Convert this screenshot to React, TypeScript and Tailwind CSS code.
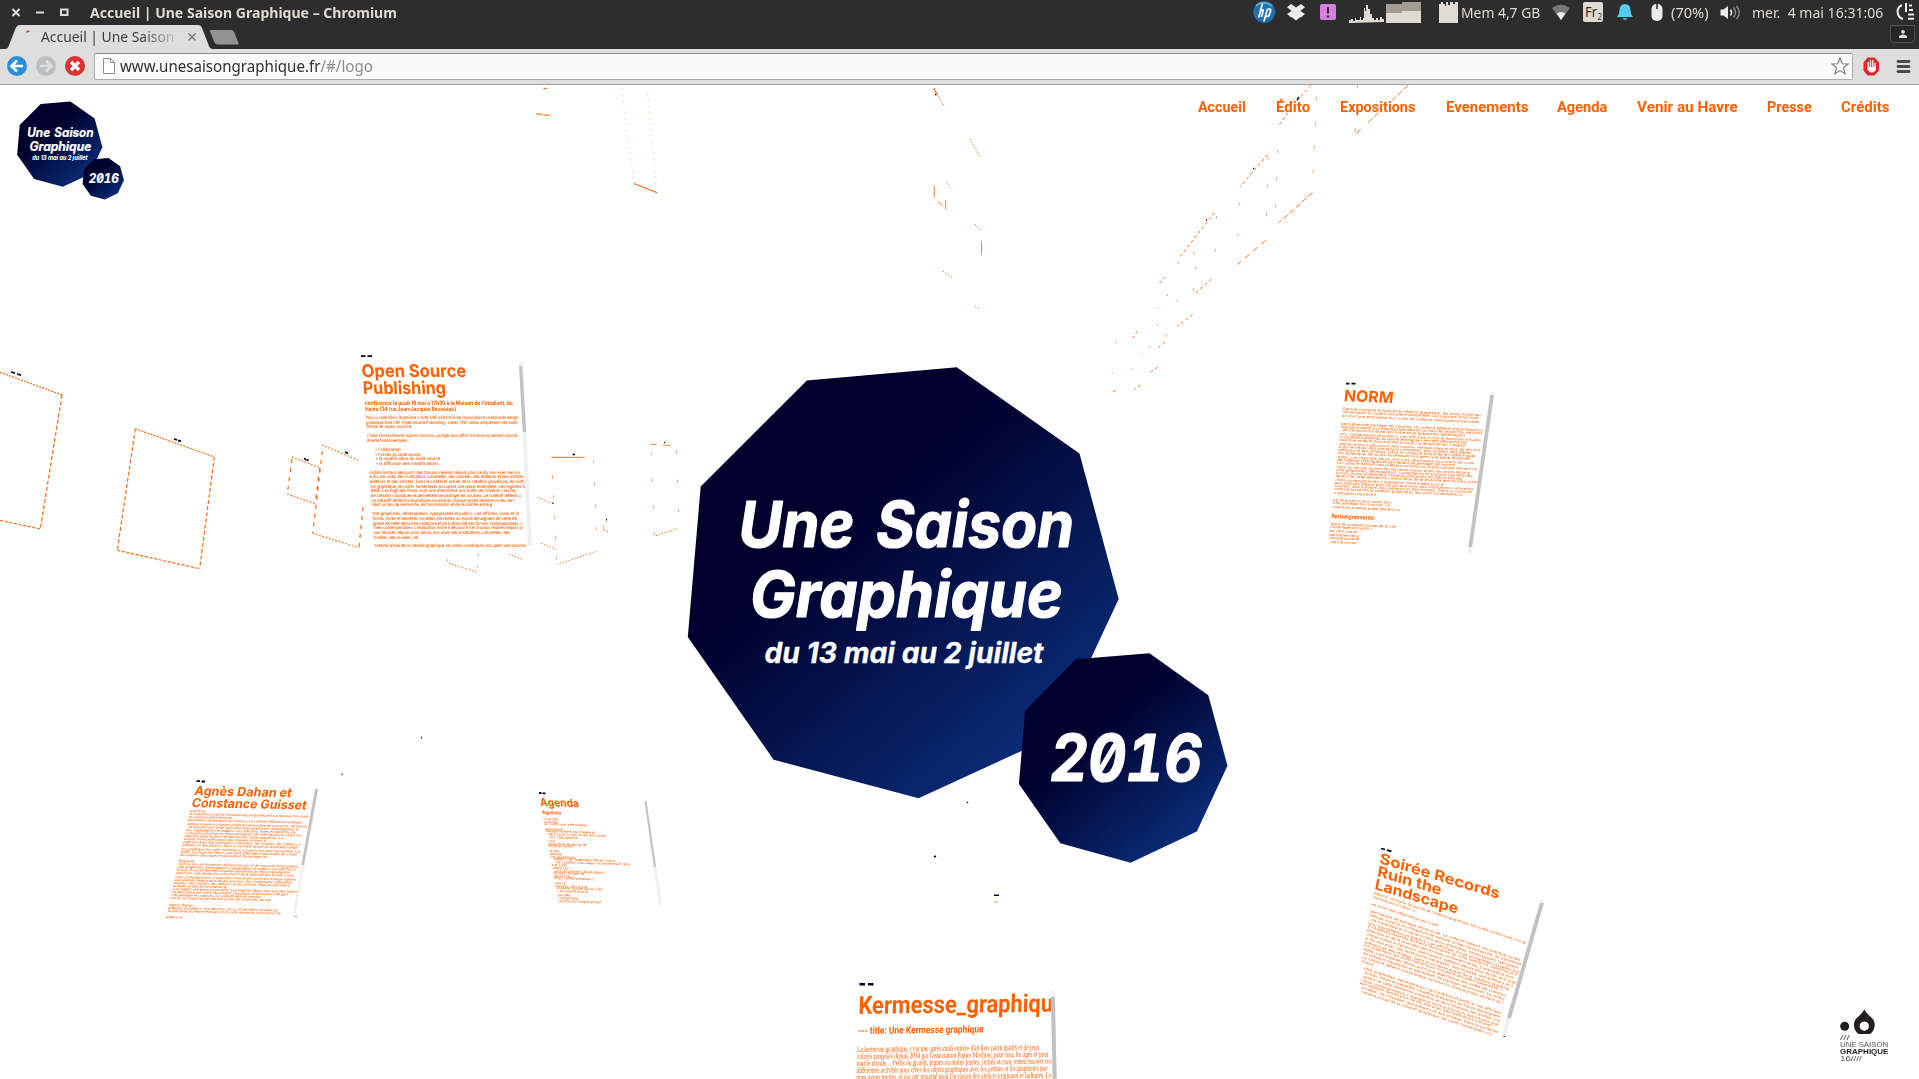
import React, { useLayoutEffect, useRef, useState } from "react";

/* Single line of text stretched horizontally to the given width. */
function Fit({ w, children, className = "", origin = "origin-left" }: { w: number; children: React.ReactNode; className?: string; origin?: string }) {
  const ref = useRef<HTMLSpanElement>(null);
  const [s, setS] = useState(1);
  useLayoutEffect(() => {
    const el = ref.current;
    if (el && el.offsetWidth) setS(w / el.offsetWidth);
  }, [w]);
  return (
    <span className={"block shrink-0 whitespace-nowrap " + className} style={{ width: w }}>
      <span ref={ref} className={"inline-block " + origin} style={{ transform: `scaleX(${s})` }}>
        {children}
      </span>
    </span>
  );
}

const CORPUS =
  "Dans le contexte actuel de la création graphique, les outils numériques occupent une place essentielle. Les logiciels libres sont une alternative aux outils de création classiques et permettent de partager les sources. Le collectif défend une pratique ouverte où chaque projet devient un lieu de recherche, de transmission et de rencontre entre graphistes, développeurs, typographes et publics. Les affiches, livres et identités visuelles présentés au Havre témoignent de cette démarche collective et de la diversité des formes contemporaines. L'exposition invite à découvrir des travaux réalisés depuis plus de dix ans avec des institutions culturelles, des musées, des éditeurs et des artistes. ";

function slice(i: number, n: number) {
  const start = (i * 61) % CORPUS.length;
  return (CORPUS + CORPUS).slice(start, start + n).trim();
}

/* [width, gap before, left indent, explicit text] */
type Row = [number, number?, number?, string?];

function Rows({ rows, chars, rowClass }: { rows: Row[]; chars: number; rowClass: string }) {
  return (
    <div className={rowClass}>
      {rows.map(([w, gap = 0, ind = 0, text], i) => (
        <div key={i} style={{ marginTop: gap, marginLeft: ind }}>
          <Fit w={w}>{text ?? slice(i, Math.max(6, Math.round(w * chars)))}</Fit>
        </div>
      ))}
    </div>
  );
}

const openRows: Row[] = [
  [152, 0, 0, "Pour sa collection « Graphisme » 2016, UNE SAISON invite l'association bruxelloise de design"],
  [152, 0, 0, "graphique libre OSP (Open Source Publishing). Libres, OSP utilise uniquement des outils"],
  [47, 0, 0, "libres et open source."],
  [151, 4.4, 0, "L'Open Source utilise les logiciels communs, partagés pour définir la licence qui permet à sources"],
  [42, 0, 0, "liberté fondamentales :"],
  [26, 4.3, 7, "•  l'utilisation"],
  [45, 0, 7, "•  l'accès au code source"],
  [65, 0, 7, "•  la modification du code source"],
  [63, 0, 7, "•  la diffusion des modifications"],
  [151, 4.1], [154], [154], [154], [145], [150], [144], [121],
  [147, 4.5], [144], [150], [150], [137], [44],
  [152, 4.2],
];

const normRows: Row[] = [
  [138, 0], [136], [137],
  [142, 5], [142], [125], [141], [128], [127], [141], [133], [137], [132], [136], [118], [140], [133], [137], [126], [142], [108], [138], [137], [129], [43],
  [59, 4], [57], [68],
];

const agnesRows: Row[] = [
  [15, 0, 0, "jeudi 19 mai"], [119, 0, 0, "de l'exposition en salle de l'artothèque dans la bibliothèque Oscar Niemeyer. Vernissage"], [44], [114], [120], [113], [110], [116], [99], [82], [118], [116], [120], [116], [88],
  [15, 3, 0, "Biographie"], [121], [119], [113], [118], [121], [118], [116], [54], [125], [116], [90], [101],
  [25, 3, 0, "Agnès Dahan"], [109], [113],
  [16, 3, 0, "agence"],
];

const agendaRows: Row[] = [
  [15, 0, 0, "13 mai 2016"], [14], [44], [18, 2], [50], [60], [28, 0, 3],
  [8, 2], [38], [24], [10, 2.5], [13], [26], [62, 0, 3], [74, 0, 5],
  [15, 1], [18], [50, 0, 2], [31], [20], [42], [10, 2], [32], [46], [31], [13, 2], [20], [42],
];

const soireeRows: Row[] = [
  [153, 0], [42], [66, 3], [150, 4], [152], [150], [152], [150], [148], [151], [148], [146], [139], [143], [142], [141], [12],
  [138, 3, 4], [136, 0, 5], [138, 0, 4], [137, 0, 4], [133, 0, 2], [136, 0, 5], [132, 0, 5],
];

function Scene() {
  const seg = "stroke-[#f96a0c]";
  return (
    <svg className="absolute inset-0 h-full w-full" viewBox="0 85 1919 994" fill="none">
      <g className={seg} strokeWidth="1.2">
        <g strokeDasharray="2 1.2">
          <path d="M0 372.3L62.3 395M135.3 428.7L214.3 457" />
          <path d="M0 520.3L40.3 529M117.3 550.3L199.7 568.7" strokeDasharray="3.2 1.5" />
          <path d="M292 457L319.7 467.7M287.3 494L315.3 503.7M322.3 445L360 461M312.7 533.3L358.7 547.7" strokeDasharray="1.6 1.8" />
        </g>
        <path d="M62 395L40.3 529M135.3 428.7L117.3 550.3M214.3 457L199.7 568.7" strokeDasharray="4 2.2" />
        <path d="M292 459L287.3 494M319.7 467.7L315.3 503.7M322.3 451L312.7 533.3M363 507L359 547" strokeDasharray="4 5" />
      </g>
      <g transform="translate(340 340) scale(.33333)" className={seg} strokeWidth="3">
        <path d="M634 352H700" />
        <path d="M700 352H735M933 313H950M969 316H990" opacity=".8" />
        <path opacity=".6" d="M637 405v12M641 465v12M644 526v12M647 587v12M649 648v11M761 360v9M763 427v11M766 494v10M769 562v10M934 336v9M937 416v10M940 496v10M943 576v10M1009 332v10M1012 419v10M1015 506v10M415 640v9M412 675v8M322 657v9" />
        <path strokeDasharray="4 5" d="M652 673L773 633M595 472L637 491M603 610L648 628M327 670L410 696M507 643L548 658M948 587L1013 565M797 543l6 2M790 557v12M792 570l12 5" />
      </g>
      <g transform="translate(880 80) scale(.35714 .33333)" className={seg} strokeWidth="2.8">
        <path strokeDasharray="4 5" d="M151 24L181 80M252 177L280 231M186 306l12 17M266 432l14 18M176 573l26 20M266 679l12 8" />
        <path opacity=".9" d="M152 319v32M184 360v28M284 484v40M162 364l13 12" />
        <path strokeDasharray="9 8" d="M1206 16L1165 66M1142 98L1115 139M1085 224L1008 321M936 398L838 533M928 597L882 641M875 703L832 740M800 590l-20 22M721 754l-14 20M798 786l-18 16M778 861L753 879M730 915l-18 13M660 930l-12 9" />
        <path strokeDasharray="17 14" d="M1080 481L1000 554" />
        <path strokeDasharray="17 7" d="M1478 16L1430 65M1396 98L1362 133M1346 148L1330 165M1211 338L1117 428" />
        <path opacity=".6" d="M1337 16v9M1222 50v12M1219 124v12M1216 196v12M1213 268v12M1331 144v12M1113 209v10M1110 291v10M1107 372v10M1087 230v10M1085 314v9M1082 397v10M1006 369v9M1003 460v9M942 408v9M939 507v9M880 516v9M883 561v9M878 624v9M835 543v9M832 660v6M805 642v6M777 681v4M777 732v6M802 763v7M754 797v6M732 819v4M662 783v7M706 864v5M651 878v4" />
      </g>
      <g transform="scale(1.2239)" className={seg} strokeWidth=".9">
        <path strokeDasharray=".8 4" opacity=".5" d="M508 73L518 150M529 77L536 150" />
        <path d="M518 150L537 157.500" />
        <path d="M438 93L450 94.500" strokeDasharray="5 .8" />
        <path d="M444 72l3 .5M763 72l3 6M813 737h2" />
      </g>
      <g stroke="#00002d" strokeWidth="2">
        <path strokeWidth="1.8" d="M11 372l4 1.200M17 374l4 1.200M174 439l3 .9M178 440.500l3 .6M304 458.500l2 .8M306.500 460h2M361 356.200h4.500M367.500 356.200h4.500" />
        <path strokeWidth="1.4" d="M345 452l3 1.500M572.500 454.500h2.500M664 442.500h1M552.500 503l1 .5M606 519.500h1M421 737.500h1M341.500 774.500h1M967 803l1-1M934 857l2-1M994 895.200h5M935 94.500h1M1297 100l2-3M1253 168.500h1M1206 220h1" />
        <path strokeWidth="1.8" d="M1346 383.600h3.500M1351.500 383.600h4M196.500 781.200h3.500M201.500 781.500h3.500M539 793h2.500M542.500 793.300h3M1381 848.500l4 1M1387 850.200l4.500 1.200" />
        <path strokeWidth="2.6" d="M859.500 984.300h5.500M868 984.300h5.500" />
      </g>
      {/* scrollbars */}
      <g>
        <path fill="#f0f0f0" d="M519 362h4l9 184h-4z" />
        <path fill="#c1c1c1" d="M519 366h3l4.200 66h-3.400z" />
        <path fill="#f0f0f0" d="M1490.500 392h4L1471.500 553.500h-4z" />
        <path fill="#c1c1c1" d="M1490.300 395h3.600L1472 547h-3.600z" />
        <path fill="#f0f0f0" d="M315.500 789h3L295 918h-3z" />
        <path fill="#c1c1c1" d="M315 789h3L304 865h-2.600z" />
        <path fill="#f0f0f0" d="M644.500 801h2L662 905h-3z" />
        <path fill="#c1c1c1" d="M644.500 801h2L656 867h-2z" />
        <path fill="#f0f0f0" d="M1540 900h4.500L1505.500 1037h-4z" />
        <path fill="#c1c1c1" d="M1540 903h3.800L1511 1018h-4z" />
        <path fill="#f0f0f0" d="M1050.500 991h4.500l2 88h-4z" />
        <path fill="#c1c1c1" d="M1051 997h3.800l1.800 82h-4z" />
        <path fill="#333" d="M295.500 916h1v1h-1zM1503.500 1036h1.500v1h-1.500z" />
      </g>
    </svg>
  );
}

function SeasonLogo({ className, id }: { className: string; id: string }) {
  return (
    <svg className={className} viewBox="687 366 541 498">
      <defs>
        <linearGradient id={id} x1=".28" y1=".22" x2=".82" y2=".85">
          <stop offset=".18" stopColor="#00002c" />
          <stop offset="1" stopColor="#0a2b75" />
        </linearGradient>
      </defs>
      <polygon fill={`url(#${id})`} points="806.900,380.400 956.700,367.200 1079.500,453.400 1118.700,599.100 1054.800,735.700 918.600,798.200 773.600,759.700 687.800,637 700.700,486.600" />
      <polygon fill={`url(#${id})`} points="1075.800,659.300 1149.500,653.200 1208.300,695.200 1227.500,765.800 1196.800,831.400 1130.600,862.800 1060.300,843.200 1018.900,784.100 1025.200,710.700" />
      <g fill="#fff" stroke="#fff" strokeLinejoin="bevel" fontFamily="Inter, sans-serif" fontWeight="700" fontStyle="italic">
        <g strokeWidth="1.200">
          <text x="738.500" y="547.200" fontSize="63.500" textLength="116" lengthAdjust="spacingAndGlyphs">Une</text>
          <text x="876" y="547.200" fontSize="63.500" textLength="198" lengthAdjust="spacingAndGlyphs">Saison</text>
          <text x="750" y="617.400" fontSize="63.500" textLength="313" lengthAdjust="spacingAndGlyphs">Graphique</text>
          <text x="1050" y="781.400" fontSize="64" textLength="152" lengthAdjust="spacingAndGlyphs" className="[font-feature-settings:'zero','tnum']">2016</text>
        </g>
        <text x="764.500" y="662.500" fontSize="28" strokeWidth=".3" textLength="279" lengthAdjust="spacingAndGlyphs">du 13 mai au 2 juillet</text>
      </g>
    </svg>
  );
}

function SystemPanel() {
  return (
    <div className="flex h-6 w-full items-center bg-[#2d2d2d] text-[#dfdbd2]">
      <svg className="ml-3 h-6 w-[60px] shrink-0" viewBox="12 0 60 24" fill="none" stroke="#dfdbd2" strokeWidth="2">
        <path d="M12.500 9l7 7M19.500 9l-7 7M36 12.500h8" />
        <path d="M61 9.500h6.500v5.500h-6.500z" />
      </svg>
      <Fit w={307} className="-mt-px ml-[18px] font-['Noto_Sans'] text-[15px] leading-6 font-bold">Accueil | Une Saison Graphique – Chromium</Fit>
      <svg className="ml-auto h-6 w-[207px] shrink-0" viewBox="1252 0 207 24">
        <circle cx="1264.300" cy="12" r="11" fill="#1d6fae" />
        <path d="M1256 6a11 10 0 0 1 16 0" stroke="#8cc4e8" strokeWidth="2" fill="none" opacity=".6" />
        <path d="M1262.500 3.500l-3.800 14M1260 11.500q4-3.500 3 0l-1.600 5.500M1267.500 9l-3.600 12.500M1267 9.500q4.500-1.500 3.500 1.500l-1.200 4q-1 2-3.500 1.200" stroke="#fff" strokeWidth="1.700" fill="none" />
        <g fill="#ececec">
          <path d="M1291 4l5 3.400-4.500 3.300-4.500-3.500zM1301 4l-5 3.400 4.700 3.300 4.300-3.500zM1287 14l4.500-3 4.500 3.400-4.800 3.100zM1305 14l-4.500-3-4.500 3.400 4.800 3.100z" />
          <path d="M1291.500 8.500l4.500-1 4.500 1v8.500l-4.500 3.500-4.500-3.500z" />
        </g>
        <rect x="1320" y="4" width="16" height="16" rx="2" fill="#d67fe0" />
        <path d="M1328 7v6.500M1328 15.500v2" stroke="#2d2d2d" strokeWidth="2" />
        <path fill="#dfdbd2" d="M1349 23v-3h2v-1h2v2h2v-3h1v2h4v-3h1v3h2v-2h1v-10h1v3h1v-6h2v4h2v5h2v4h2v2h2v-2h2v2h2v-3h2v2h2v3z" />
        <path fill="#a29c93" d="M1386 4h16v-2h19v12h-35z" />
        <path fill="#dfdbd2" d="M1386 13h16v-2h19v12h-35zM1439 23v-19h2v-2h2v2h2v2h1v-4h2v3h2v-3h3v2h2v-2h3v21zM1439 4z" />
      </svg>
      <Fit w={79.5} className="-mt-px ml-0.5 font-['Noto_Sans'] text-[15px] leading-6">Mem 4,7 GB</Fit>
      <svg className="ml-2.5 h-6 w-[115px] shrink-0" viewBox="1550 0 115 24">
        <path d="M1552 8q9-7 18 0l-9 12z" fill="#777" />
        <path d="M1556.500 13.500q4.500-3 9 0l-4.500 6.500z" fill="#ececec" />
        <rect x="1583" y="2" width="20" height="20" rx="2" fill="#dfdbd2" />
        <text x="1585" y="17" fontSize="14" fontFamily="Noto Sans" fill="#2d2d2d" textLength="12" lengthAdjust="spacingAndGlyphs">Fr</text>
        <text x="1597.500" y="20" fontSize="8" fontFamily="Noto Sans" fill="#2d2d2d">2</text>
        <path d="M1617 17q2.500-2.500 2.500-7 0-5.500 5.500-6 5.500.5 5.500 6 0 4.500 2.500 7zM1622.500 18.200h5q-2.500 3.600-5 0z" fill="#55ccf0" />
        <rect x="1651.500" y="4" width="11" height="17" rx="5" fill="#ececec" />
        <path d="M1657 4v5" stroke="#555" strokeWidth="2" />
      </svg>
      <Fit w={38} className="-mt-px ml-1.5 font-['Noto_Sans'] text-[15px] leading-6">(70%)</Fit>
      <svg className="ml-2.5 h-6 w-[24px] shrink-0" viewBox="1719 0 24 24" fill="none">
        <path d="M1720.500 9.500h3l4.500-3.500v13l-4.500-3.500h-3z" fill="#ececec" />
        <path d="M1730.500 9.500q2 3 0 6" stroke="#ececec" strokeWidth="1.500" />
        <path d="M1733.500 7.500q4 5 0 10M1736.500 6q5.500 6.500 0 13" stroke="#8a8a8a" strokeWidth="1.500" />
      </svg>
      <Fit w={131} className="-mt-px ml-[9px] font-['Noto_Sans'] text-[15px] leading-6"><span className="whitespace-pre">mer.  4 mai 16:31:06</span></Fit>
      <svg className="mr-[3px] ml-3 h-6 w-[21px] shrink-0" viewBox="1895 0 21 24" fill="none" stroke="#ececec" strokeWidth="2">
        <path d="M1902 5a7.500 7.500 0 0 0 1 14M1906 3v9M1909 5.500h3M1909 10h4M1908 14.500h6M1908 18.800h6" />
      </svg>
    </div>
  );
}

function TabStrip() {
  return (
    <div className="relative flex h-[25px] w-full items-end bg-[#2d2d2d]">
      <svg className="absolute top-0 left-0 h-[25px] w-[245px]" viewBox="0 24 245 25">
        <path d="M0 49h5q2.500 0 3.500-2.500l7-18q1.300-3.500 4.500-3.500h178q3 0 4 3l7 18q1 3 4 3z" fill="#dedede" />
        <path d="M210.500 30h21q2 0 2.600 2l4.400 11q.6 1.500-1 1.500h-20q-2 0-3-2l-4.500-11q-.5-1.500.5-1.500z" fill="#939393" />
        <path d="M25.500 32.500l1.500-1.700 3-.3-1 1.700z" fill="#e03a30" />
        <path d="M188.500 33.500l7 7M195.500 33.500l-7 7" stroke="#777" strokeWidth="1.500" />
      </svg>
      <div className="relative ml-[41px] h-full overflow-hidden [mask-image:linear-gradient(to_right,#000_75%,#0003_100%)]">
        <Fit w={133} className="font-['Noto_Sans'] text-[14.500px] leading-[25px] text-[#3b3b3b]">Accueil | Une Saison</Fit>
      </div>
      <div className="mr-1 mb-1.5 ml-auto flex h-[18px] w-[25px] items-center justify-center rounded-b-[4px] border border-[#555] bg-[#262626]">
        <svg className="h-3 w-3" viewBox="0 0 12 12" fill="#dcdcdc"><circle cx="6" cy="3.800" r="1.900" /><path d="M2 10v-2q1.800-1.600 4-1.600t4 1.600v2z" /></svg>
      </div>
    </div>
  );
}

function Toolbar() {
  return (
    <div className="flex h-9 w-full items-center border-b border-[#a0a0a0] bg-[#dedede] pb-px">
      <svg className="ml-[7px] h-5 w-[79px] shrink-0" viewBox="7 56 79 20" fill="none" strokeWidth="2.600">
        <circle cx="17" cy="66" r="10" fill="#2a8fd8" />
        <path d="M23 66h-11M17 60.500l-5.500 5.500 5.500 5.500" stroke="#fff" />
        <circle cx="46" cy="66" r="10" fill="#bcbfc1" />
        <path d="M40 66h11M46 60.500l5.500 5.500-5.500 5.500" stroke="#dedede" />
        <circle cx="75" cy="66" r="10" fill="#dc3232" />
        <path d="M71 62l8 8M79 62l-8 8" stroke="#fff" strokeWidth="3.400" />
      </svg>
      <div className="ml-2 flex h-[27px] w-[1759px] shrink-0 items-center rounded-[2px] border border-[#aaa] border-t-[#8c8c8c] bg-[#fafafa]">
        <svg className="ml-2 h-4 w-3 shrink-0" viewBox="0 0 12 16" fill="#fff" stroke="#8f8f8f"><path d="M.5.500h7l4 4v11h-11zM7.500.500v4h4" /></svg>
        <Fit w={253} className="ml-[5px] font-['Noto_Sans'] text-[16px] leading-[24px] text-[#2f2f2f]">
          www.unesaisongraphique.fr<span className="text-[#8c8c8c]">/#/logo</span>
        </Fit>
        <svg className="mr-[3px] ml-auto h-[18px] w-[18px]" viewBox="0 0 18 18" fill="#fff" stroke="#777" strokeWidth="1.100"><path d="M9 1l2.200 5.800 6 .2-4.800 3.700 1.700 6L9 13.300l-5.100 3.400 1.700-6L.8 7l6-.2z" /></svg>
      </div>
      <svg className="ml-[9px] h-5 w-[51px] shrink-0" viewBox="1862 56 51 20">
        <path d="M1867.500 57.500h7l4.500 5v8l-4.500 5h-7l-4-5v-8z" fill="#e2252b" />
        <path d="M1868.200 70v-7.500M1870.500 69v-8.500M1872.800 69v-8.500M1875 70v-6.500" stroke="#fff" strokeWidth="1.300" strokeLinecap="round" />
        <path d="M1867.500 67h7l1.500-1-.5 4-2 2.500h-3.500l-2-2.500z" fill="#fff" />
        <path d="M1898 61.500h11M1898 66.500h11M1898 71.500h11" stroke="#4a4a4a" strokeWidth="2.800" strokeLinecap="round" />
      </svg>
    </div>
  );
}

const NAV: [string, number, string][] = [
  ["Accueil", 48, ""],
  ["Édito", 34, "ml-[30px]"],
  ["Expositions", 75.5, "ml-[30px]"],
  ["Evenements", 82, "ml-[30px]"],
  ["Agenda", 50, "ml-[29.500px]"],
  ["Venir au Havre", 100.5, "ml-[29.500px]"],
  ["Presse", 44.5, "ml-[29.500px]"],
  ["Crédits", 48.5, "ml-[30px]"],
];

export default function App() {
  return (
    <div className="flex h-[1079px] w-full flex-col overflow-hidden bg-white">
      <SystemPanel />
      <TabStrip />
      <Toolbar />
      <main className="relative min-h-0 flex-1 overflow-hidden bg-white text-[#ff6000]">
        <nav className="flex justify-end pt-[10px] pr-[29.500px] font-['Roboto'] text-[15.500px] leading-6 font-bold">
          {NAV.map(([label, w, gap]) => (
            <a key={label} href="#" className={gap}><Fit w={w}>{label}</Fit></a>
          ))}
        </nav>

        <article className="absolute top-[277px] left-[361px] origin-top-left font-['Inter'] [transform:matrix(1,0,0.067,1,0,0)]">
          <h2 className="text-[17.500px] leading-[17px] font-bold">
            <Fit w={105}>Open Source</Fit>
            <Fit w={83}>Publishing</Fit>
          </h2>
          <div className="mt-[3.500px] ml-px text-[6px] leading-[6.200px] font-bold">
            <Fit w={148}>conférence le jeudi 19 mai à 17h30 à la Maison de l'étudiant, du</Fit>
            <Fit w={91}>Havre (34 rue Jean-Jacques Rousseau)</Fit>
          </div>
          <Rows rows={openRows} chars={0.55} rowClass="mt-1 ml-px text-[4.500px] leading-[4.650px] font-medium" />
        </article>

        <article className="absolute top-[302px] left-[1344.500px] origin-top-left font-['Inter'] [transform:matrix(1,0.045,-0.105,1,0,0)]">
          <h2 className="text-[15.500px] leading-[17px] font-bold"><Fit w={49}>NORM</Fit></h2>
          <Rows rows={normRows} chars={0.5} rowClass="mt-1 text-[3.500px] leading-[3.280px]" />
          <div className="mt-[3px] text-[6px] leading-[7px] font-bold"><Fit w={44}>Renseignements:</Fit></div>
          <Rows rows={[[65], [42], [27], [29], [30], [27]]} chars={0.5} rowClass="mt-1 text-[3.500px] leading-[3.600px]" />
        </article>

        <article className="absolute top-[700px] left-[196px] origin-top-left font-['Inter'] [transform:matrix(1,0.022,-0.225,1,0,0)]">
          <h2 className="text-[12.500px] leading-[11.500px] font-bold">
            <Fit w={97}>Agnès Dahan et</Fit>
            <Fit w={115}>Constance Guisset</Fit>
          </h2>
          <Rows rows={agnesRows} chars={0.6} rowClass="mt-0.5 text-[3.400px] leading-[3.130px] font-medium" />
        </article>

        <article className="absolute top-[710.500px] left-[539px] origin-top-left font-['Inter'] [transform:matrix(1,0.03,0.187,1,0,0)]">
          <h2 className="text-[11px] leading-[12px] font-bold"><Fit w={39}>Agenda</Fit></h2>
          <div className="mt-px text-[5px] leading-[6px] font-bold"><Fit w={19}>Agenda</Fit></div>
          <Rows rows={agendaRows} chars={0.55} rowClass="mt-[3px] text-[3.200px] leading-[2.600px] font-medium" />
        </article>

        <article className="absolute top-[904px] left-[858.500px] origin-top-left [transform:matrix(1,-0.012,-0.03,1,0,0)]">
          <h2 className="w-[193px] overflow-hidden font-['Roboto'] text-[25px] leading-[34px] font-bold"><Fit w={206}>Kermesse_graphique</Fit></h2>
          <div className="mt-[2px] font-['Roboto'] text-[10px] leading-3 font-bold"><Fit w={126}>--- title: Une Kermesse graphique</Fit></div>
          <div className="mt-[9px] font-['Liberation_Serif'] text-[8.500px] leading-[6.900px]">
            <Fit w={182}>La kermesse graphique, c'est une après-midi entière d'ateliers participatifs et de jeux</Fit>
            <Fit w={192}>colorés proposés depuis 2014 par l'association Papier Machine, pour tous les âges et pour</Fit>
            <Fit w={195}>tout le monde… Petits ou grands, jeunes ou moins jeunes, initiés ou non, venez essayer ces</Fit>
            <Fit w={191}>différentes activités pour créer des objets graphiques avec les artistes et les graphistes que</Fit>
            <Fit w={195}>nous avons invités, et qui ont imaginé pour l'occasion des ateliers originaux et ludiques. Le</Fit>
          </div>
        </article>

        <article className="absolute top-[767px] left-[1380.500px] origin-top-left font-['Inter'] [transform:matrix(1,0.3,-0.18,1,0,0)]">
          <h2 className="text-[14.500px] leading-[12.800px] font-bold">
            <Fit w={120}>Soirée Records</Fit>
            <Fit w={64}>Ruin the</Fit>
            <Fit w={83}>Landscape</Fit>
          </h2>
          <Rows rows={soireeRows} chars={0.5} rowClass="mt-0.5 text-[3.500px] leading-[3.780px] [transform:skewY(1.500deg)] origin-top-left" />
        </article>

        <Scene />
        <SeasonLogo id="season-large" className="absolute top-[281px] left-[687px] h-[498px] w-[541px]" />
        <SeasonLogo id="season-small" className="absolute top-[15.500px] left-[17px] h-[99px] w-[107px]" />

        <div className="absolute top-[924px] left-[1840px] flex w-[52px] flex-col font-['Liberation_Sans'] text-[6.500px] leading-[7px] text-[#555]">
          <svg className="h-[25px] w-[36px]" viewBox="0 0 36 25" fill="#231f20">
            <circle cx="4.700" cy="17.300" r="4.500" />
            <path fillRule="evenodd" d="M24.300 .5q2 3.500 5.500 6.800a10.400 10.400 0 1 1-11 0q3.500-3.300 5.500-6.800zM24.300 12.500a4.600 4.600 0 1 0 .01 0z" />
          </svg>
          <Fit w={9}>///</Fit>
          <Fit w={48}>UNE SAISON</Fit>
          <Fit w={48} className="font-bold text-[#231f20]">GRAPHIQUE</Fit>
          <Fit w={21}>16////</Fit>
        </div>
      </main>
    </div>
  );
}
